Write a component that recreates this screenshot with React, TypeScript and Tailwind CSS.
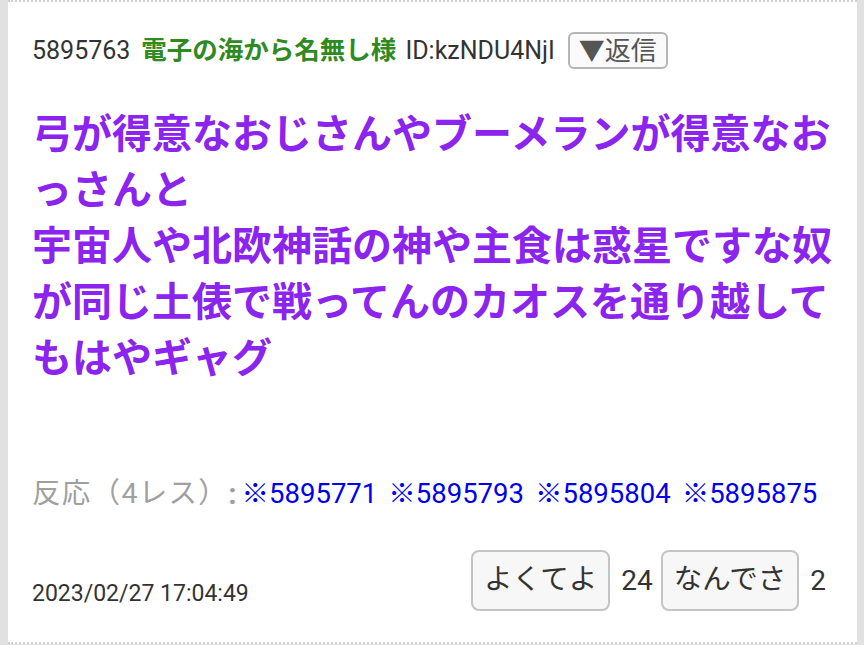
const FONT = "font-['Roboto','Noto_Sans_CJK_JP',sans-serif]";

const REPLIES = ["5895771", "5895793", "5895804", "5895875"];

const TITLE_LINES = [
  "弓が得意なおじさんやブーメランが得意なお",
  "っさんと",
  "宇宙人や北欧神話の神や主食は惑星ですな奴",
  "が同じ土俵で戦ってんのカオスを通り越して",
  "もはやギャグ",
];

function VoteButton({ label, count }: { label: string; count: number }) {
  return (
    <div className="flex items-center gap-[11px]">
      <button className="h-[61px] rounded-[8px] border-2 border-[#c4c4c4] bg-[#f7f7f7] px-[11px] text-[28.5px] leading-none text-[#333]">
        {label}
      </button>
      <span className="text-[28px] text-[#333]">{count}</span>
    </div>
  );
}

export default function App() {
  return (
    <div className={`h-[645px] w-[864px] overflow-hidden bg-[#e1e1e1] ${FONT}`}>
      <div className="ml-[8px] w-[849px] bg-white">
        <div className="border-t-2 border-dotted border-[#cfcfcf]" />

        <article className="px-[24px] pt-[30px] pb-[31px]">
          {/* header */}
          <div className="flex h-[37px] items-center text-[25px] leading-none text-[#333]">
            <span>5895763</span>
            <span className="ml-[11px] text-[25.5px] font-bold text-[#2f8a1f]">電子の海から名無し様</span>
            <span className="ml-[9px]">ID:kzNDU4NjI</span>
            <button className="ml-[13px] flex h-[37px] items-center rounded-[6px] border-2 border-[#b5b5b5] bg-[#fafafa] px-[9px] text-[26px] leading-none text-[#555]">
              ▼返信
            </button>
          </div>

          {/* body */}
          <p className="mt-[38px] text-[40px] font-bold leading-[56px] text-[#8b24ee] whitespace-nowrap">
            {TITLE_LINES.map((line, i) => (
              <span key={i} className="block">
                {line}
              </span>
            ))}
          </p>

          {/* replies */}
          <div className="mt-[87px] flex h-[40px] items-center leading-none">
            <span className="text-[28.5px] tracking-[1.3px] text-[#a0a0a0]">反応（4レス）</span>
            <span className="text-[30px] font-bold text-[#a0a0a0]">:</span>
            <div className="ml-[5px] flex gap-[11px] text-[27.5px]">
              {REPLIES.map((r) => (
                <a key={r} className="text-[#0000ee]">
                  ※{r}
                </a>
              ))}
            </div>
          </div>

          {/* footer */}
          <div className="mt-[36px] flex items-end justify-between">
            <span className="mb-[6px] text-[23px] leading-none text-[#333]">2023/02/27 17:04:49</span>
            <div className="mr-[7px] flex gap-[8px]">
              <VoteButton label="よくてよ" count={24} />
              <VoteButton label="なんでさ" count={2} />
            </div>
          </div>
        </article>

        <div className="border-b-2 border-dotted border-[#cfcfcf]" />
      </div>
    </div>
  );
}
